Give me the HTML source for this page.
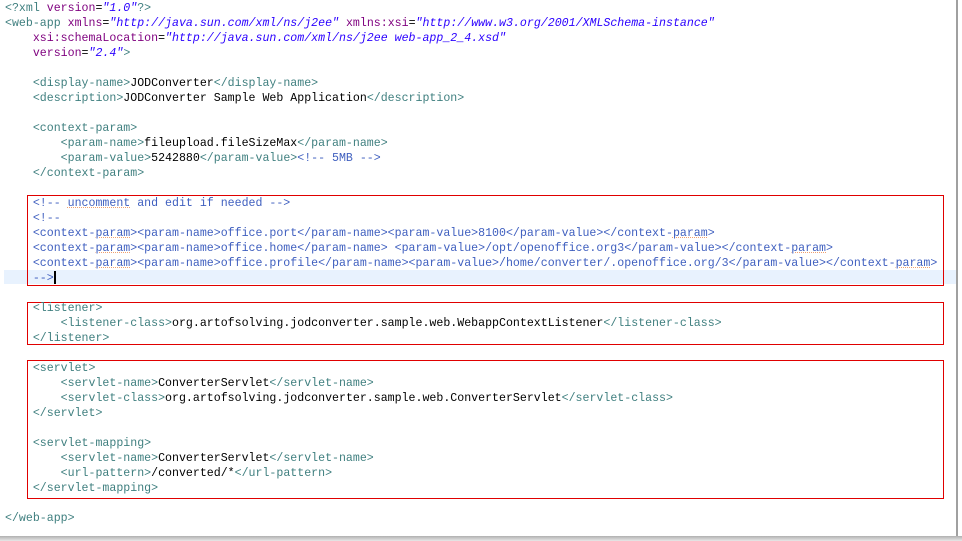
<!DOCTYPE html>
<html><head><meta charset="utf-8"><style>
html,body{margin:0;padding:0;background:#fff;width:962px;height:541px;overflow:hidden;position:relative}
.l{position:absolute;left:5px;height:15px;line-height:15px;font-family:"Liberation Mono",monospace;font-size:11.6px;white-space:pre;color:#000;margin-top:1px}
.t{color:#3f7f7f}.a{color:#7f007f}.v{color:#2a00ff;font-style:italic}.c{color:#3f5fbf}
.box{position:absolute;border:1px solid #e00000;left:27px;width:915px}
.hl{position:absolute;left:4px;width:953px;top:270px;height:14px;background:#e8f2fe}
.vr{position:absolute;left:956px;top:0;width:2px;height:536px;background:#a0a0a0}
.bt{position:absolute;left:0;top:536px;width:962px;height:5px;background:linear-gradient(#b0b0b0,#e8e8e8)}
.sq{text-decoration:underline dotted #f0a070;text-decoration-thickness:1px}
</style></head><body>
<div class="hl"></div>
<div class="vr"></div><div class="bt"></div>
<div class="box" style="top:195px;height:89px"></div>
<div class="box" style="top:302px;height:41px"></div>
<div class="box" style="top:360px;height:137px"></div>
<div class="l" style="top:0px"><span class="t">&lt;?xml </span><span class="a">version</span>=<span class="v">"1.0"</span><span class="t">?&gt;</span></div>
<div class="l" style="top:15px"><span class="t">&lt;web-app </span><span class="a">xmlns</span>=<span class="v">"http://java.sun.com/xml/ns/j2ee"</span> <span class="a">xmlns:xsi</span>=<span class="v">"http://www.w3.org/2001/XMLSchema-instance"</span></div>
<div class="l" style="top:30px">    <span class="a">xsi:schemaLocation</span>=<span class="v">"http://java.sun.com/xml/ns/j2ee web-app_2_4.xsd"</span></div>
<div class="l" style="top:45px">    <span class="a">version</span>=<span class="v">"2.4"</span><span class="t">&gt;</span></div>
<div class="l" style="top:75px">    <span class="t">&lt;display-name&gt;</span>JODConverter<span class="t">&lt;/display-name&gt;</span></div>
<div class="l" style="top:90px">    <span class="t">&lt;description&gt;</span>JODConverter Sample Web Application<span class="t">&lt;/description&gt;</span></div>
<div class="l" style="top:120px">    <span class="t">&lt;context-param&gt;</span></div>
<div class="l" style="top:135px">        <span class="t">&lt;param-name&gt;</span>fileupload.fileSizeMax<span class="t">&lt;/param-name&gt;</span></div>
<div class="l" style="top:150px">        <span class="t">&lt;param-value&gt;</span>5242880<span class="t">&lt;/param-value&gt;</span><span class="c">&lt;!-- 5MB --&gt;</span></div>
<div class="l" style="top:165px">    <span class="t">&lt;/context-param&gt;</span></div>
<div class="l c" style="top:195px">    &lt;!-- <span class="sq">uncomment</span> and edit if needed --&gt;</div>
<div class="l c" style="top:210px">    &lt;!--</div>
<div class="l c" style="top:225px">    &lt;context-<span class="sq">param</span>&gt;&lt;param-name&gt;office.port&lt;/param-name&gt;&lt;param-value&gt;8100&lt;/param-value&gt;&lt;/context-<span class="sq">param</span>&gt;</div>
<div class="l c" style="top:240px">    &lt;context-<span class="sq">param</span>&gt;&lt;param-name&gt;office.home&lt;/param-name&gt; &lt;param-value&gt;/opt/openoffice.org3&lt;/param-value&gt;&lt;/context-<span class="sq">param</span>&gt;</div>
<div class="l c" style="top:255px">    &lt;context-<span class="sq">param</span>&gt;&lt;param-name&gt;office.profile&lt;/param-name&gt;&lt;param-value&gt;/home/converter/.openoffice.org/3&lt;/param-value&gt;&lt;/context-<span class="sq">param</span>&gt;</div>
<div class="l c" style="top:270px">    --&gt;<span style="display:inline-block;width:2px;height:13px;background:#000;vertical-align:middle"></span></div>
<div class="l" style="top:300px">    <span class="t">&lt;listener&gt;</span></div>
<div class="l" style="top:315px">        <span class="t">&lt;listener-class&gt;</span>org.artofsolving.jodconverter.sample.web.WebappContextListener<span class="t">&lt;/listener-class&gt;</span></div>
<div class="l" style="top:330px">    <span class="t">&lt;/listener&gt;</span></div>
<div class="l" style="top:360px">    <span class="t">&lt;servlet&gt;</span></div>
<div class="l" style="top:375px">        <span class="t">&lt;servlet-name&gt;</span>ConverterServlet<span class="t">&lt;/servlet-name&gt;</span></div>
<div class="l" style="top:390px">        <span class="t">&lt;servlet-class&gt;</span>org.artofsolving.jodconverter.sample.web.ConverterServlet<span class="t">&lt;/servlet-class&gt;</span></div>
<div class="l" style="top:405px">    <span class="t">&lt;/servlet&gt;</span></div>
<div class="l" style="top:435px">    <span class="t">&lt;servlet-mapping&gt;</span></div>
<div class="l" style="top:450px">        <span class="t">&lt;servlet-name&gt;</span>ConverterServlet<span class="t">&lt;/servlet-name&gt;</span></div>
<div class="l" style="top:465px">        <span class="t">&lt;url-pattern&gt;</span>/converted/*<span class="t">&lt;/url-pattern&gt;</span></div>
<div class="l" style="top:480px">    <span class="t">&lt;/servlet-mapping&gt;</span></div>
<div class="l" style="top:510px"><span class="t">&lt;/web-app&gt;</span></div>
</body></html>
